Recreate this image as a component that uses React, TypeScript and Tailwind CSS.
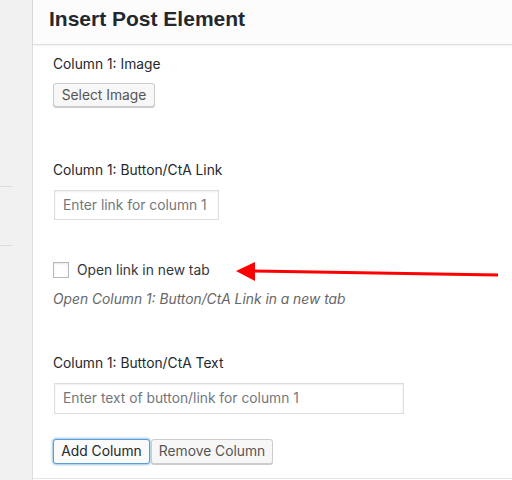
import React from "react";

export default function App() {
  const font = { fontFamily: 'Inter, "Liberation Sans", Arial, sans-serif' };
  return (
    <div className="relative flex w-[512px] h-[480px] overflow-hidden bg-white text-[#23282d]" style={font}>
      <div className="w-[33px] shrink-0 bg-[#f1f1f1] border-r border-[#dddddd] flex flex-col">
        <div className="h-[186px]" />
        <div className="h-px w-[12px] bg-[#dcdcdc]" />
        <div className="h-[58px]" />
        <div className="h-px w-[12px] bg-[#dcdcdc]" />
      </div>
      <div className="flex-1 flex flex-col">
        <div className="h-[45px] shrink-0 bg-[#fcfcfc] border-b border-[#dddddd] shadow-[0_1px_3px_rgba(0,0,0,0.05)] pl-[16px] flex items-center">
          <h1 className="text-[21px] font-bold leading-none text-[#23282d] -mt-[8px] font-['Liberation_Sans',Arial,sans-serif]">Insert Post Element</h1>
        </div>
        <div className="flex-1 pl-[20px] pt-[10px] flex flex-col items-start">
          <div className="text-[13.8px] leading-[18px]">Column 1: Image</div>
          <button className="mt-[10px] h-[24px] w-[102px] text-[13.8px] text-[#555] bg-[#f7f7f7] border border-[#cccccc] rounded-[3px] shadow-[0_1px_0_#cccccc]">Select Image</button>

          <div className="mt-[54px] text-[13.8px] leading-[18px]">Column 1: Button/CtA Link</div>
          <div className="mt-[11px] ml-px h-[30px] w-[165px] border border-[#dddddd] shadow-[inset_0_1px_2px_rgba(0,0,0,0.07)] flex items-center px-[8px] text-[13.8px] text-[#72777c] whitespace-nowrap overflow-hidden">Enter link for column 1</div>

          <div className="mt-[42px] flex items-center h-[16px]">
            <div className="w-[16px] h-[16px] border border-[#b4b9be] shadow-[inset_0_1px_2px_rgba(0,0,0,0.1)] bg-white" />
            <span className="ml-[8px] text-[13.8px] text-[#32373c]">Open link in new tab</span>
          </div>
          <div className="mt-[12px] text-[13.8px] leading-[18px] italic text-[#666]">Open Column 1: Button/CtA Link in a new tab</div>

          <div className="mt-[46px] text-[13.8px] leading-[18px]">Column 1: Button/CtA Text</div>
          <div className="mt-[11px] ml-px h-[31px] w-[350px] border border-[#dddddd] shadow-[inset_0_1px_2px_rgba(0,0,0,0.07)] flex items-center px-[8px] text-[13.8px] text-[#72777c]">Enter text of button/link for column 1</div>

          <div className="mt-[25px] flex">
            <button className="h-[25px] w-[97px] text-[13.8px] text-[#23282d] bg-[#fafafa] border border-[#5b9dd9] rounded-[3px] shadow-[0_0_3px_rgba(0,115,170,0.8)]">Add Column</button>
            <button className="ml-px h-[25px] w-[122px] text-[13.8px] text-[#555] bg-[#f7f7f7] border border-[#cccccc] rounded-[3px] shadow-[0_1px_0_#cccccc]">Remove Column</button>
          </div>
        </div>
        <div className="h-[2px] shrink-0 border-t border-[#e5e5e5]" />
      </div>
      <svg className="absolute left-0 top-0 pointer-events-none" width="512" height="480">
        <line x1="252" y1="271" x2="498" y2="275" stroke="#ff0000" strokeWidth="3" />
        <polygon points="236,271 255,262 255,281" fill="#ff0000" />
      </svg>
    </div>
  );
}
